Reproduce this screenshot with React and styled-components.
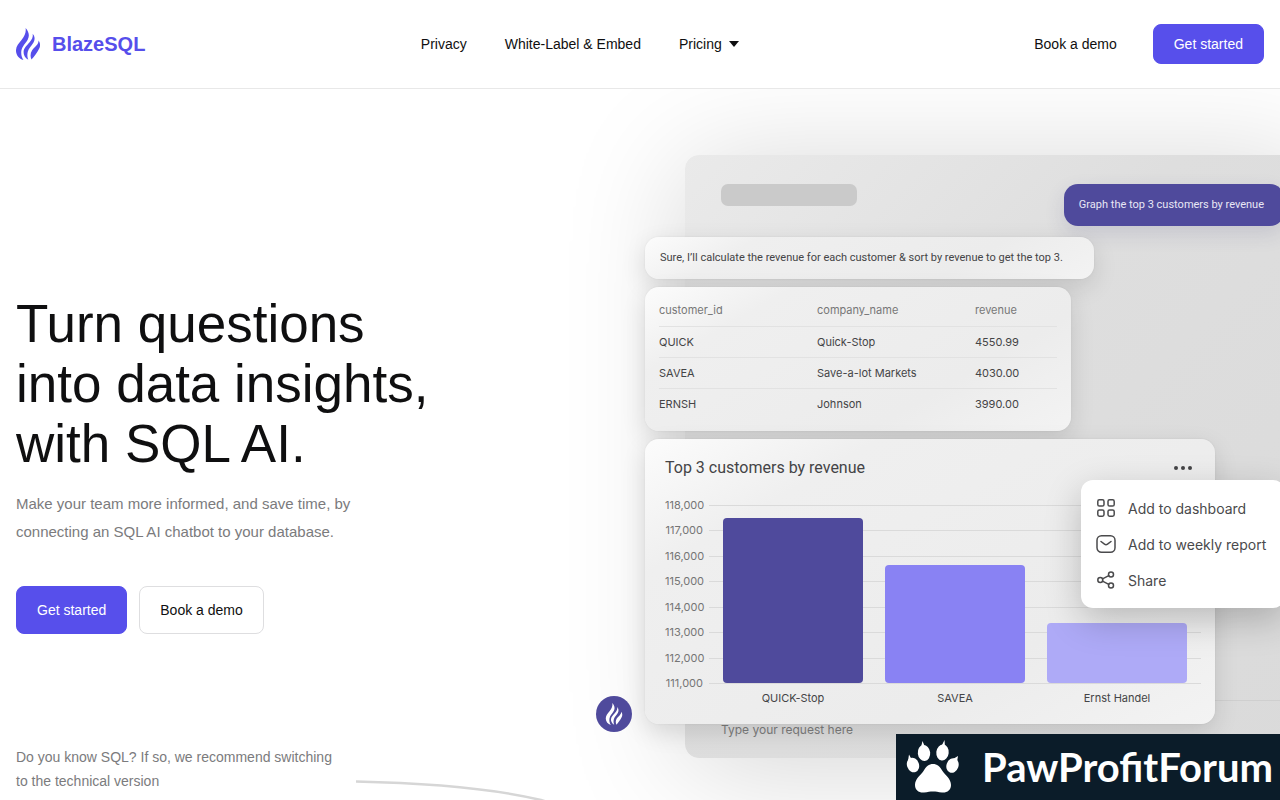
import React from "react";
import styled, { createGlobalStyle } from "styled-components";

const GlobalStyle = createGlobalStyle`
  *, *::before, *::after { box-sizing: border-box; }
  body {
    margin: 0;
    background: #fff;
    color: #0f0f10;
    font-family: "Liberation Sans", Arial, sans-serif;
    font-size: 14px;
    overflow-x: hidden;
  }
  a { color: inherit; text-decoration: none; }
  button { font: inherit; cursor: pointer; }
  h1, h2, p, ul { margin: 0; padding: 0; }
`;

const Page = styled.div`
  overflow: hidden;
`;

const Header = styled.header`
  position: relative;
  z-index: 2;
  display: flex;
  align-items: center;
  justify-content: space-between;
  padding: 24px 16px;
  background: #fff;
  border-bottom: 1px solid #e8e8e8;
`;

const Brand = styled.a`
  display: flex;
  align-items: center;
  gap: 12px;
  color: #564eeb;
  font-size: 20px;
  font-weight: 700;
`;

const Nav = styled.nav`
  display: flex;
  align-items: center;
  gap: 38px;
`;

const MenuButton = styled.button`
  display: flex;
  align-items: center;
  gap: 7px;
  padding: 0;
  border: 0;
  background: none;
  color: inherit;
`;

const Actions = styled.div`
  display: flex;
  align-items: center;
  gap: 16px;
`;

const TextLink = styled.a`
  padding: 0 20px;
`;

const Button = styled.button`
  height: ${(p) => (p.$large ? 48 : 40)}px;
  padding: 0 20px;
  border: 1px solid ${(p) => (p.$outline ? "#dedee0" : "#574feb")};
  border-radius: 8px;
  background: ${(p) => (p.$outline ? "#fff" : "#574feb")};
  color: ${(p) => (p.$outline ? "#0f0f10" : "#fff")};
`;

const Hero = styled.main`
  display: grid;
  grid-template-columns: minmax(0, 1fr) minmax(0, 1fr);
`;

const Intro = styled.section`
  padding: 205px 0 0 16px;
`;

const Title = styled.h1`
  font-size: 53px;
  font-weight: 400;
  line-height: 60px;
  white-space: nowrap;
`;

const Lead = styled.p`
  margin-top: 16px;
  color: #7b7b7d;
  font-size: 15px;
  line-height: 28px;
`;

const ButtonRow = styled.div`
  display: flex;
  gap: 12px;
  margin-top: 40px;
`;

const TechNote = styled.div`
  display: flex;
  align-items: flex-start;
  gap: 24px;
  margin-top: 111px;
  color: #7b7b7d;
  line-height: 24px;
  white-space: nowrap;
`;

const Curve = styled.svg`
  flex: none;
  margin-top: 35px;
`;

const Demo = styled.section`
  padding: 66px 0 80px 45px;
  color: #444446;
  font-family: Inter, sans-serif;
  font-size: 11px;
`;

const Panel = styled.div`
  position: relative;
  margin-right: -40px;
  padding: 29px 36px 0;
  border-radius: 14px;
  background: linear-gradient(135deg, #eaeaea 0%, #dedede 40%, #dadada 100%);
  box-shadow: 0 10px 120px rgba(0, 0, 0, 0.17);
`;

const PanelTop = styled.div`
  display: flex;
  align-items: flex-start;
  justify-content: space-between;
`;

const Placeholder = styled.div`
  width: 136px;
  height: 22px;
  border-radius: 7px;
  background: #cacaca;
`;

const Question = styled.p`
  padding: 0 20px 0 15px;
  border-radius: 14px;
  background: #4f4a9c;
  color: #e8e7f5;
  font-family: Roboto, sans-serif;
  line-height: 42px;
  white-space: nowrap;
  box-shadow: 0 8px 20px rgba(60, 56, 110, 0.14);
`;

const Thread = styled.div`
  position: relative;
  z-index: 1;
  display: flex;
  flex-direction: column;
  align-items: flex-start;
  gap: 8px;
  margin: 11px 0 0 -76px;
`;

const Card = styled.div`
  position: relative;
  border-radius: 14px;
  background: linear-gradient(150deg, #fcfcfc 0%, #efefef 22%, #ececec 70%, #f3f3f3 100%);
  box-shadow: 0 8px 24px rgba(0, 0, 0, 0.12), 0 0 2px rgba(0, 0, 0, 0.08);
`;

const Reply = styled(Card)`
  width: 449px;
  padding: 0 15px;
  font-family: Roboto, sans-serif;
  line-height: 42px;
  white-space: nowrap;
`;

const TableCard = styled(Card)`
  width: 426px;
  padding: 8px 14px 12px;
`;

const Table = styled.table`
  width: 100%;
  border-collapse: collapse;
  table-layout: fixed;

  th, td {
    height: 31px;
    padding: 0;
    text-align: left;
    font-weight: 400;
  }
  th { color: #777; }
  th:last-child { width: 82px; }
  td { border-top: 1px solid #e2e2e2; }
`;

const ChartCard = styled(Card)`
  width: 570px;
  height: 285px;
  padding: 18px 14px 0 20px;
`;

const ChartHead = styled.div`
  display: flex;
  align-items: center;
  justify-content: space-between;
  padding-right: 8px;

  h2 {
    font-family: Roboto, sans-serif;
    font-size: 16px;
    font-weight: 400;
    line-height: 22px;
  }
`;

const MoreButton = styled.button`
  display: flex;
  padding: 0;
  border: 0;
  background: none;
  color: #444446;
`;

const Chart = styled.div`
  display: grid;
  grid-template-columns: 38px 1fr;
  column-gap: 6px;
  margin-top: 19px;
`;

const Axis = styled.ul`
  display: flex;
  flex-direction: column;
  justify-content: space-between;
  height: 192px;
  list-style: none;
  text-align: right;
  line-height: 14px;
  color: #757575;
`;

const Plot = styled.div`
  position: relative;
  height: 178px;
  margin-top: 7px;
`;

const GridLines = styled.div`
  position: absolute;
  inset: 0 0 -1px;
  display: flex;
  flex-direction: column;
  justify-content: space-between;

  span { height: 1px; background: #dadada; }
`;

const Bars = styled.div`
  position: relative;
  display: flex;
  align-items: flex-end;
  gap: 22px;
  height: 100%;
  padding: 0 14px;
`;

const Bar = styled.div`
  flex: 1;
  border-radius: 4px;
  background: ${(p) => p.$color};
`;

const BarLabels = styled.div`
  grid-column: 2;
  display: flex;
  gap: 22px;
  padding: 0 14px;
  line-height: 16px;

  span { flex: 1; text-align: center; }
`;

const Popover = styled.div`
  position: absolute;
  top: 41px;
  left: 436px;
  display: flex;
  flex-direction: column;
  width: 204px;
  padding: 10px 15px;
  border-radius: 12px;
  background: #fff;
  box-shadow: 0 12px 36px rgba(0, 0, 0, 0.22);
`;

const PopoverItem = styled.button`
  display: flex;
  align-items: center;
  gap: 12px;
  height: 36px;
  padding: 0;
  border: 0;
  background: none;
  color: #4a4a4c;
  font-size: 14px;
  white-space: nowrap;

  svg { flex: none; }
`;

const Avatar = styled.div`
  position: absolute;
  bottom: -8px;
  left: -49px;
  display: grid;
  place-items: center;
  width: 36px;
  height: 36px;
  border-radius: 50%;
  background: #4f4a9c;
  color: #fff;
`;

const Prompt = styled.input`
  display: block;
  width: calc(100% + 72px);
  height: 58px;
  margin: -24px -36px 0;
  padding: 0 36px;
  border: 0;
  border-top: 1px solid #cfcfcf;
  border-radius: 0 0 14px 14px;
  background: transparent;
  font: 12px Inter, sans-serif;

  &::placeholder { color: #7c7c7c; opacity: 1; }
`;

const Watermark = styled.aside`
  position: fixed;
  right: 0;
  bottom: 0;
  z-index: 3;
  display: flex;
  align-items: center;
  gap: 22px;
  width: 384px;
  height: 66px;
  padding-left: 10px;
  background: #0b1c29;
  color: #fff;
  font-family: Lato, sans-serif;
  font-size: 40px;
  font-weight: 700;
  line-height: 66px;

  svg { flex: none; }
`;

const Flame = ({ width, height }) => (
  <svg width={width} height={height} viewBox="0 0 24 32" fill="currentColor" aria-hidden="true">
    <path d="M9.600 0C13 3.800 13.700 7.600 11.800 11.400C9.700 15.400 6.200 18 5.400 22.500C4.900 25.800 5.500 29 7.400 32C3.200 30.800 .2 27.300 0 23C-.2 18.500 2.600 15.500 5.500 12C8.700 8.200 10.300 4.500 9.600 0Z" />
    <path d="M16.700 5.800C19 8.500 19.200 11.700 17.500 14.500C15.400 18 12.500 20.300 11.700 24C11.100 26.700 11.300 29.400 12.300 31.700C9 30 7.400 27 7.600 23.800C7.900 19.800 10.800 17.500 13.400 14.500C16 11.500 17.300 9 16.700 5.800Z" />
    <path d="M22.600 12.600C24.400 15.200 24.500 18 23.100 20.700C21.300 24.300 18.500 28.500 15.500 31.500C14.100 28.500 14.300 25.300 16 22.600C18.300 19 22.600 17 22.600 12.600Z" />
  </svg>
);

const Paw = () => (
  <svg width="54" height="54" viewBox="0 0 54 54" fill="#fff" aria-hidden="true">
    <path d="M27 24C31 24 34 26.500 36.500 31C39 35 45 38.500 45 45C45 50 41 53 36 52.500C32 52 30 51.500 27 51.500C24 51.500 22 52 18 52.500C13 53 9 50 9 45C9 38.500 15 35 17.500 31C20 26.500 23 24 27 24Z" />
    <ellipse cx="7" cy="25" rx="6" ry="7.500" transform="rotate(-20 7 25)" />
    <ellipse cx="18" cy="13" rx="6.200" ry="8" transform="rotate(-6 18 13)" />
    <ellipse cx="36.500" cy="12.500" rx="6.200" ry="8" transform="rotate(6 36.500 12.500)" />
    <ellipse cx="46.500" cy="25.500" rx="6" ry="7.500" transform="rotate(20 46.500 25.500)" />
    <path d="M2 21L3 14.500L6 20ZM15 7L16.500 1L19 7ZM35 7L38.500 0L39 7ZM47 19L52 16L51 22Z" />
  </svg>
);

const iconProps = {
  width: 20,
  height: 20,
  viewBox: "0 0 20 20",
  fill: "none",
  stroke: "currentColor",
  strokeWidth: 1.5,
  strokeLinecap: "round",
  strokeLinejoin: "round",
  "aria-hidden": true,
};

const GridIcon = () => (
  <svg {...iconProps}>
    <rect x="1.800" y="1.800" width="6.200" height="6.200" rx="1.600" />
    <rect x="12" y="1.800" width="6.200" height="6.200" rx="1.600" />
    <rect x="1.800" y="12" width="6.200" height="6.200" rx="1.600" />
    <rect x="12" y="12" width="6.200" height="6.200" rx="1.600" />
  </svg>
);

const MailIcon = () => (
  <svg {...iconProps}>
    <rect x="1" y="1.700" width="18" height="16.600" rx="4.500" />
    <path d="M5 7.500L8.500 10.200Q10 11.300 11.500 10.200L15 7.500" />
  </svg>
);

const ShareIcon = () => (
  <svg {...iconProps}>
    <circle cx="4.300" cy="10" r="2.500" />
    <circle cx="15" cy="4.500" r="2.500" />
    <circle cx="15" cy="15.500" r="2.500" />
    <path d="M6.500 8.900L12.800 5.600M6.500 11.100L12.800 14.400" />
  </svg>
);

const rows = [
  ["QUICK", "Quick-Stop", "4550.99"],
  ["SAVEA", "Save-a-lot Markets", "4030.00"],
  ["ERNSH", "Johnson", "3990.00"],
];

const ticks = ["118,000", "117,000", "116,000", "115,000", "114,000", "113,000", "112,000", "111,000"];

const bars = [
  { name: "QUICK-Stop", value: 165, color: "#4f4a9c" },
  { name: "SAVEA", value: 118, color: "#8982f3" },
  { name: "Ernst Handel", value: 60, color: "#aeaaf7" },
];

export default function App() {
  return (
    <Page>
      <GlobalStyle />
      <Header>
        <Brand href="#">
          <Flame width={24} height={32} />
          BlazeSQL
        </Brand>
        <Nav>
          <a href="#privacy">Privacy</a>
          <a href="#embed">White-Label &amp; Embed</a>
          <MenuButton type="button">
            Pricing
            <svg width="10" height="6" viewBox="0 0 10 6" fill="currentColor" aria-hidden="true">
              <path d="M0 0H10L5 6Z" />
            </svg>
          </MenuButton>
        </Nav>
        <Actions>
          <TextLink href="#demo">Book a demo</TextLink>
          <Button type="button">Get started</Button>
        </Actions>
      </Header>

      <Hero>
        <Intro>
          <Title>
            Turn questions
            <br />
            into data insights,
            <br />
            with SQL AI.
          </Title>
          <Lead>
            Make your team more informed, and save time, by
            <br />
            connecting an SQL AI chatbot to your database.
          </Lead>
          <ButtonRow>
            <Button type="button" $large>Get started</Button>
            <Button type="button" $large $outline>Book a demo</Button>
          </ButtonRow>
          <TechNote>
            <p>
              Do you know SQL? If so, we recommend switching
              <br />
              to the technical version
            </p>
            <Curve width="240" height="60" viewBox="0 0 240 60" fill="none" aria-hidden="true">
              <path d="M0 1.500C70 3 135 8 185 20C210 27 228 40 238 58" stroke="#d6d6d6" strokeWidth="2.500" />
            </Curve>
          </TechNote>
        </Intro>

        <Demo>
          <Panel>
            <PanelTop>
              <Placeholder />
              <Question>Graph the top 3 customers by revenue</Question>
            </PanelTop>
            <Thread>
              <Reply>Sure, I’ll calculate the revenue for each customer &amp; sort by revenue to get the top 3.</Reply>
              <TableCard>
                <Table>
                  <thead>
                    <tr>
                      <th>customer_id</th>
                      <th>company_name</th>
                      <th>revenue</th>
                    </tr>
                  </thead>
                  <tbody>
                    {rows.map((row) => (
                      <tr key={row[0]}>
                        {row.map((cell) => (
                          <td key={cell}>{cell}</td>
                        ))}
                      </tr>
                    ))}
                  </tbody>
                </Table>
              </TableCard>
              <ChartCard>
                <ChartHead>
                  <h2>Top 3 customers by revenue</h2>
                  <MoreButton type="button" aria-label="More options">
                    <svg width="20" height="6" viewBox="0 0 20 6" fill="currentColor" aria-hidden="true">
                      <circle cx="3" cy="3" r="2" />
                      <circle cx="10" cy="3" r="2" />
                      <circle cx="17" cy="3" r="2" />
                    </svg>
                  </MoreButton>
                </ChartHead>
                <Chart>
                  <Axis>
                    {ticks.map((tick) => (
                      <li key={tick}>{tick}</li>
                    ))}
                  </Axis>
                  <Plot>
                    <GridLines>
                      {ticks.map((tick) => (
                        <span key={tick} />
                      ))}
                    </GridLines>
                    <Bars>
                      {bars.map((bar) => (
                        <Bar key={bar.name} $color={bar.color} style={{ height: bar.value }} />
                      ))}
                    </Bars>
                  </Plot>
                  <BarLabels>
                    {bars.map((bar) => (
                      <span key={bar.name}>{bar.name}</span>
                    ))}
                  </BarLabels>
                </Chart>
                <Popover>
                  <PopoverItem type="button"><GridIcon />Add to dashboard</PopoverItem>
                  <PopoverItem type="button"><MailIcon />Add to weekly report</PopoverItem>
                  <PopoverItem type="button"><ShareIcon />Share</PopoverItem>
                </Popover>
                <Avatar><Flame width={18} height={22} /></Avatar>
              </ChartCard>
            </Thread>
            <Prompt type="text" aria-label="Request" placeholder="Type your request here" />
          </Panel>
        </Demo>
      </Hero>

      <Watermark>
        <Paw />
        PawProfitForum
      </Watermark>
    </Page>
  );
}
